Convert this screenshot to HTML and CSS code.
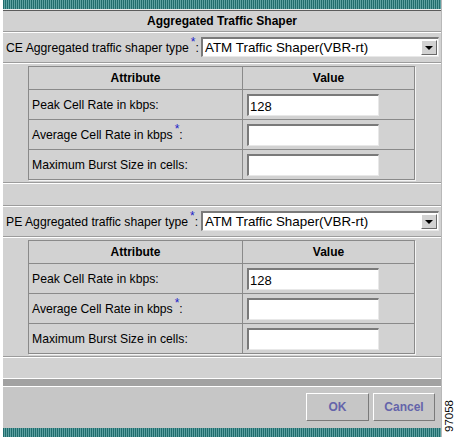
FILE: index.html
```html
<!DOCTYPE html>
<html lang="en">
<head>
  <meta charset="UTF-8" />
  <title>Aggregated Traffic Shaper</title>
  <link rel="stylesheet" href="styles.css">
</head>
<body>

  <div class="window">
    <div class="stripe"></div>
    <div class="title">Aggregated Traffic Shaper</div>

    <div class="type-row etched">
      <label>CE Aggregated traffic shaper type<sup>*</sup>:</label>
      <div class="select"><span>ATM Traffic Shaper(VBR-rt)</span><span class="arrow"></span></div>
    </div>
    <div class="attrs etched">
      <table>
        <tr class="head"><th>Attribute</th><th>Value</th></tr>
        <tr><td>Peak Cell Rate in kbps:</td><td><div class="field">128</div></td></tr>
        <tr><td>Average Cell Rate in kbps<sup>*</sup>:</td><td><div class="field"></div></td></tr>
        <tr><td>Maximum Burst Size in cells:</td><td><div class="field"></div></td></tr>
      </table>
    </div>
    <div class="blank etched"></div>

    <div class="type-row etched">
      <label>PE Aggregated traffic shaper type<sup>*</sup>:</label>
      <div class="select"><span>ATM Traffic Shaper(VBR-rt)</span><span class="arrow"></span></div>
    </div>
    <div class="attrs etched">
      <table>
        <tr class="head"><th>Attribute</th><th>Value</th></tr>
        <tr><td>Peak Cell Rate in kbps:</td><td><div class="field">128</div></td></tr>
        <tr><td>Average Cell Rate in kbps<sup>*</sup>:</td><td><div class="field"></div></td></tr>
        <tr><td>Maximum Burst Size in cells:</td><td><div class="field"></div></td></tr>
      </table>
    </div>
    <div class="blank last"></div>

    <div class="divider"></div>
    <div class="buttons">
      <button class="ok">OK</button>
      <button class="cancel">Cancel</button>
    </div>
    <div class="stripe"></div>
  </div>

  <div class="figno">97058</div>

</body>
</html>
```

FILE: styles.css
```css
* {
  box-sizing: border-box;
}

body {
  margin: 0;
  height: 437px;
  background: white;
  font-family: "Liberation Sans", Arial, sans-serif;
  font-size: 12.2px;
  color: #000;
  display: flex;
  align-items: flex-end;
  overflow: hidden;
}

.window {
  width: 440px;
  margin-left: 2px;
  background: #d2d2d2;
  border-left: 1px solid #fff;
  border-right: 1px solid #b8b8b8;
  display: flex;
  flex-direction: column;
}

.stripe {
  height: 9px;
  background: repeating-linear-gradient(90deg, #206c6d 0 1px, #5fa1a2 1px 2px);
}

.title {
  height: 24px;
  border-top: 1px solid #ececec;
  border-bottom: 1px solid #fff;
  box-shadow: inset 0 1px #5c5c5c, inset 0 -1px #9c9c9c;
  display: flex;
  justify-content: center;
  align-items: center;
  font-size: 12px;
  font-weight: bold;
}

.etched {
  border-bottom: 1px solid #fff;
  box-shadow: inset 0 -1px #9c9c9c;
}

.type-row {
  height: 31px;
  padding: 4px 2px 6px 3px;
  display: flex;
  align-items: center;
}

.type-row label {
  padding-top: 2px;
}

sup {
  color: #2020c8;
  font-size: 12px;
  line-height: 0;
  vertical-align: 6px;
  margin-left: 2px;
}

.select {
  width: 238px;
  height: 20px;
  margin-left: auto;
  background: #fff;
  border-top: 2px solid #7a7a7a;
  border-left: 2px solid #7a7a7a;
  border-right: 1px solid #e8e8e8;
  border-bottom: 1px solid #e8e8e8;
  display: flex;
  align-items: center;
  justify-content: space-between;
  padding-left: 2px;
  font-size: 13.4px;
}

.arrow {
  width: 16px;
  height: 15px;
  margin-right: 1px;
  background: #d2d2d2;
  border-top: 1px solid #fff;
  border-left: 1px solid #fff;
  border-right: 1px solid #6a6a6a;
  border-bottom: 1px solid #6a6a6a;
  position: relative;
}

.arrow::after {
  content: "";
  position: absolute;
  left: 3px;
  top: 5px;
  border-left: 4px solid transparent;
  border-right: 4px solid transparent;
  border-top: 4px solid #000;
}

.attrs {
  padding: 2px 0 3px 25px;
}

table {
  width: 387px;
  border-collapse: collapse;
  border: 1px solid #7e7e7e;
  box-shadow: 1px 1px #f4f4f4;
}

th, td {
  border: 1px solid #8a8a8a;
  padding: 0 0 0 3px;
  text-align: left;
  font-weight: normal;
}

th {
  text-align: center;
  font-size: 12px;
  font-weight: bold;
  padding: 0;
}

th:first-child, td:first-child {
  width: 214px;
}

tr.head {
  height: 23px;
}

tr {
  height: 30px;
}

.field {
  width: 132px;
  height: 22px;
  margin-left: 1px;
  background: #fff;
  border-top: 2px solid #7a7a7a;
  border-left: 2px solid #7a7a7a;
  border-right: 1px solid #e8e8e8;
  border-bottom: 1px solid #e8e8e8;
  padding: 3px 0 0 1px;
  font-size: 13px;
}

.blank {
  height: 23px;
}

.blank.last {
  height: 20px;
}

.divider {
  height: 9px;
  background: #a2a2a2;
  border-top: 1px solid #fff;
  border-bottom: 1px solid #fff;
}

.buttons {
  height: 41px;
  background: #c6c6c6;
  padding: 6px 6px 0 0;
  display: flex;
  justify-content: flex-end;
  align-items: flex-start;
  gap: 4px;
}

.buttons button {
  height: 28px;
  background: #c6c6c6;
  border-top: 1px solid #fff;
  border-left: 1px solid #fff;
  border-right: 1px solid #7a7a7a;
  border-bottom: 1px solid #7a7a7a;
  font-family: "Liberation Sans", Arial, sans-serif;
  font-size: 12px;
  font-weight: bold;
  color: #6464aa;
}

.ok {
  width: 63px;
}

.cancel {
  width: 62px;
}

.figno {
  writing-mode: vertical-rl;
  transform: rotate(180deg);
  font-size: 11.5px;
  margin: 0 0 5px 2px;
  line-height: 10px;
}
```
